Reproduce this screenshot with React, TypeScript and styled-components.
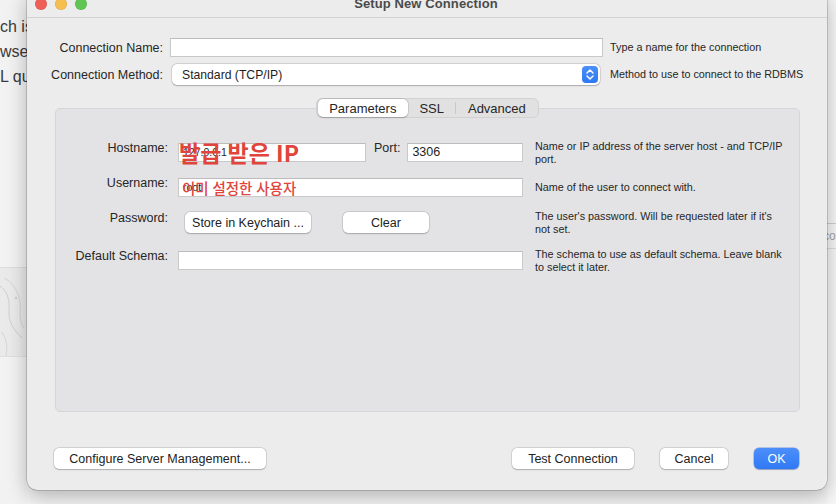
import styled, { createGlobalStyle } from "styled-components";

const GlobalStyle = createGlobalStyle`
  html, body {
    margin: 0;
    padding: 0;
  }
  body {
    font-family: "Liberation Sans", Arial, sans-serif;
    background: #f4f4f4;
    color: #222;
  }
  * {
    box-sizing: border-box;
  }
`;

const Stage = styled.div`
  display: flex;
  width: 836px;
  height: 504px;
  overflow: hidden;
  background: #f4f4f4;
`;

// ---- page behind the dialog ----

const LeftBackdrop = styled.div`
  width: 27px;
  flex: none;
  display: flex;
  flex-direction: column;
  overflow: hidden;
  background: #f2f2f2;
`;

const BackdropText = styled.div`
  padding-top: 14px;
  height: 267px;
  font-size: 16px;
  line-height: 25px;
  color: #3a3a3a;
  white-space: nowrap;
`;

const LogoStrip = styled.div`
  height: 90px;
  border-top: 1px solid #dcdcdc;
  background: #eaeaea;
  border-bottom: 1px solid #e0e0e0;
`;

const RightBackdrop = styled.div`
  flex: 1;
  display: flex;
  flex-direction: column;
  background: #f7f7f7;
  padding-top: 223px;
`;

const GhostField = styled.div`
  height: 26px;
  border-top: 1px solid #cfcfcf;
  border-bottom: 1px solid #dedede;
  font-size: 12px;
  line-height: 24px;
  color: #a4a4a4;
  white-space: nowrap;
  overflow: hidden;
  text-indent: -4px;
`;

// ---- dialog window ----

const Window = styled.div`
  width: 800px;
  height: 500px;
  flex: none;
  margin-top: -10px;
  position: relative;
  z-index: 1;
  display: flex;
  flex-direction: column;
  background: #ececec;
  border-radius: 10px;
  box-shadow: 0 0 0 0.5px rgba(0, 0, 0, 0.3), 0 6px 20px rgba(0, 0, 0, 0.28);
`;

const TitleBar = styled.div`
  height: 28px;
  flex: none;
  display: grid;
  grid-template-columns: 1fr auto 1fr;
  align-items: center;
  padding-left: 8px;
  border-bottom: 1px solid #d3d3d3;
`;

const Lights = styled.div`
  display: flex;
  gap: 8px;
`;

const Light = styled.span<{ $color: string }>`
  width: 12px;
  height: 12px;
  border-radius: 50%;
  background: ${(p) => p.$color};
  box-shadow: inset 0 0 0 0.5px rgba(0, 0, 0, 0.12);
`;

const Title = styled.div`
  font-size: 13px;
  font-weight: 700;
  color: #4b4b4b;
  margin-left: -10px;
  letter-spacing: 0.1px;
`;

const Body = styled.div`
  flex: 1;
  display: flex;
  flex-direction: column;
  padding: 20px 27px 21px 28px;
`;

const TopRow = styled.div<{ $h: number; $gap?: number }>`
  display: flex;
  align-items: center;
  height: ${(p) => p.$h}px;
  margin-top: ${(p) => p.$gap ?? 0}px;
`;

const TopLabel = styled.div`
  width: 108px;
  flex: none;
  display: flex;
  justify-content: flex-end;
  font-size: 12.5px;
  color: #262626;
  white-space: nowrap;
`;

const TextInput = styled.div<{ $w?: number; $small?: boolean; $ml?: number }>`
  position: relative;
  height: 19px;
  ${(p) => (p.$w ? `width: ${p.$w}px; flex: none;` : "flex: 1;")}
  margin-left: ${(p) => p.$ml ?? 0}px;
  background: #fff;
  border: 1px solid #c9c9c9;
  border-top-color: #bcbcbc;
  font-size: ${(p) => (p.$small ? 10.5 : 12.5)}px;
  line-height: 17px;
  padding: 0 4px;
  color: #1e1e1e;
  white-space: nowrap;
`;

const Select = styled.div`
  width: 428px;
  height: 21px;
  margin-left: 9px;
  flex: none;
  display: flex;
  align-items: center;
  justify-content: space-between;
  padding: 0 2px 0 10px;
  background: #fff;
  border-radius: 5px;
  box-shadow: 0 0 0 0.5px rgba(0, 0, 0, 0.16), 0 0.5px 1.5px rgba(0, 0, 0, 0.22);
  font-size: 12.2px;
  color: #1e1e1e;
`;

const Stepper = styled.span`
  width: 16px;
  height: 17px;
  border-radius: 4px;
  background: linear-gradient(#4a8ff8, #2f78f4);
  display: flex;
  align-items: center;
  justify-content: center;
`;

const Hint = styled.div<{ $ml?: number }>`
  margin-left: ${(p) => p.$ml ?? 0}px;
  font-size: 10.8px;
  line-height: 12.5px;
  color: #262626;
  white-space: nowrap;
`;

// ---- tabs + panel ----

const TabsRow = styled.div`
  display: flex;
  justify-content: center;
  margin-top: 13px;
  margin-bottom: -10px;
  position: relative;
  z-index: 1;
`;

const Segmented = styled.div`
  display: flex;
  align-items: center;
  height: 20px;
  padding: 0 1px;
  background: #e1e1e1;
  border: 1px solid #d2d2d2;
  border-radius: 6px;
`;

const Segment = styled.div<{ $active?: boolean }>`
  height: 18px;
  display: flex;
  align-items: center;
  padding: 0 11.5px;
  font-size: 13px;
  color: #262626;
  border-radius: 5px;
  background: ${(p) => (p.$active ? "#fff" : "transparent")};
  box-shadow: ${(p) =>
    p.$active ? "0 0 0 0.5px rgba(0,0,0,0.14), 0 0.5px 1.5px rgba(0,0,0,0.2)" : "none"};
`;

const SegDivider = styled.span`
  width: 1px;
  height: 12px;
  background: #c9c9c9;
`;

const Panel = styled.div`
  height: 304px;
  flex: none;
  padding-top: 26px;
  background: #e3e3e5;
  border: 1px solid #d6d6d8;
  border-radius: 5px;
`;

const PanelRow = styled.div<{ $h: number }>`
  display: grid;
  grid-template-columns: 112px 345px 1fr;
  column-gap: 10px;
  align-items: center;
  height: ${(p) => p.$h}px;
`;

const PanelLabel = styled.div`
  text-align: right;
  font-size: 12.5px;
  color: #262626;
  padding-bottom: 9px;
  white-space: nowrap;
`;

const FieldGroup = styled.div`
  display: flex;
  align-items: center;
`;

const InlineLabel = styled.div`
  margin: 0 7px 0 8px;
  font-size: 12.5px;
  color: #262626;
  padding-bottom: 9px;
`;

const Annotation = styled.div<{ $size: number; $weight: number; $left: number; $ws: number }>`
  position: absolute;
  inset: -6px 0;
  display: flex;
  align-items: center;
  padding-left: ${(p) => p.$left}px;
  font-family: "Noto Sans CJK KR", "Liberation Sans", sans-serif;
  font-size: ${(p) => p.$size}px;
  font-weight: ${(p) => p.$weight};
  word-spacing: ${(p) => p.$ws}px;
  color: #e0443b;
  pointer-events: none;
  white-space: pre;
`;

const Button = styled.button<{ $w: number; $ml?: number; $primary?: boolean }>`
  width: ${(p) => p.$w}px;
  margin-left: ${(p) => p.$ml ?? 0}px;
  height: 21px;
  flex: none;
  padding: 0;
  border: none;
  border-radius: 5px;
  font-family: "Liberation Sans", Arial, sans-serif;
  font-size: 12.5px;
  color: ${(p) => (p.$primary ? "#fff" : "#222")};
  background: ${(p) => (p.$primary ? "linear-gradient(#4c8ffa, #3079f5)" : "#fff")};
  box-shadow: ${(p) =>
    p.$primary
      ? "0 0 0 0.5px rgba(30,90,220,0.5), 0 0.5px 1px rgba(0,0,0,0.2)"
      : "0 0 0 0.5px rgba(0,0,0,0.17), 0 0.5px 1.5px rgba(0,0,0,0.2)"};
`;

const Footer = styled.div`
  display: flex;
  align-items: center;
  margin-top: 36px;
  margin-left: -1px;
  margin-right: 1px;
`;

const Spacer = styled.div`
  flex: 1;
`;

function StepperIcon() {
  return (
    <svg width="10" height="13" viewBox="0 0 10 13" fill="none">
      <path d="M2 5 L5 2 L8 5" stroke="#fff" strokeWidth="1.5" strokeLinecap="round" strokeLinejoin="round" />
      <path d="M2 8 L5 11 L8 8" stroke="#fff" strokeWidth="1.5" strokeLinecap="round" strokeLinejoin="round" />
    </svg>
  );
}

function FaintLogo() {
  return (
    <svg width="27" height="90" viewBox="0 0 27 90" fill="none">
      <path d="M0 18 C6 22 10 30 9 42 C8 54 14 62 22 70" stroke="#cfcfcf" strokeWidth="1" />
      <path d="M4 10 C12 14 18 22 20 34 C21 44 18 52 24 60" stroke="#d4d4d4" strokeWidth="1" />
      <path d="M2 64 C6 70 8 78 6 88" stroke="#d6d6d6" strokeWidth="1" />
      <circle cx="16" cy="30" r="1.2" fill="#cdcdcd" />
    </svg>
  );
}

export default function App() {
  return (
    <>
      <GlobalStyle />
      <Stage>
        <LeftBackdrop>
          <BackdropText>
            <div>ch is a</div>
            <div>wser</div>
            <div>L qu</div>
          </BackdropText>
          <LogoStrip>
            <FaintLogo />
          </LogoStrip>
        </LeftBackdrop>

        <Window>
          <TitleBar>
            <Lights>
              <Light $color="#ee5f57" />
              <Light $color="#f6be4f" />
              <Light $color="#61c554" />
            </Lights>
            <Title>Setup New Connection</Title>
            <div />
          </TitleBar>

          <Body>
            <TopRow $h={19}>
              <TopLabel>Connection Name:</TopLabel>
              <TextInput $w={433} $ml={7} />
              <Hint $ml={7}>Type a name for the connection</Hint>
            </TopRow>
            <TopRow $h={21} $gap={7}>
              <TopLabel>Connection Method:</TopLabel>
              <Select>
                <span>Standard (TCP/IP)</span>
                <Stepper>
                  <StepperIcon />
                </Stepper>
              </Select>
              <Hint $ml={10}>Method to use to connect to the RDBMS</Hint>
            </TopRow>

            <TabsRow>
              <Segmented>
                <Segment $active>Parameters</Segment>
                <Segment>SSL</Segment>
                <SegDivider />
                <Segment>Advanced</Segment>
              </Segmented>
            </TabsRow>

            <Panel>
              <PanelRow $h={35}>
                <PanelLabel>Hostname:</PanelLabel>
                <FieldGroup>
                  <TextInput $w={188} $small>
                    127.0.0.1
                    <Annotation $size={23} $weight={700} $left={0} $ws={1}>
                      발급 받은 IP
                    </Annotation>
                  </TextInput>
                  <InlineLabel>Port:</InlineLabel>
                  <TextInput>3306</TextInput>
                </FieldGroup>
                <Hint $ml={2}>
                  Name or IP address of the server host - and TCP/IP
                  <br />
                  port.
                </Hint>
              </PanelRow>

              <PanelRow $h={35}>
                <PanelLabel>Username:</PanelLabel>
                <TextInput $small>
                  root
                  <Annotation $size={14.5} $weight={500} $left={3} $ws={0.5}>
                    이미 설정한 사용자
                  </Annotation>
                </TextInput>
                <Hint $ml={2}>Name of the user to connect with.</Hint>
              </PanelRow>

              <PanelRow $h={35}>
                <PanelLabel>Password:</PanelLabel>
                <FieldGroup>
                  <Button $w={126} $ml={7}>
                    Store in Keychain ...
                  </Button>
                  <Button $w={86} $ml={32}>
                    Clear
                  </Button>
                </FieldGroup>
                <Hint $ml={2}>
                  The user's password. Will be requested later if it's
                  <br />
                  not set.
                </Hint>
              </PanelRow>

              <PanelRow $h={41}>
                <PanelLabel>Default Schema:</PanelLabel>
                <TextInput />
                <Hint $ml={2}>
                  The schema to use as default schema. Leave blank
                  <br />
                  to select it later.
                </Hint>
              </PanelRow>
            </Panel>

            <Footer>
              <Button $w={212}>Configure Server Management...</Button>
              <Spacer />
              <Button $w={122}>Test Connection</Button>
              <Button $w={68} $ml={26}>
                Cancel
              </Button>
              <Button $w={45} $ml={26} $primary>
                OK
              </Button>
            </Footer>
          </Body>
        </Window>

        <RightBackdrop>
          <GhostField>co</GhostField>
        </RightBackdrop>
      </Stage>
    </>
  );
}
